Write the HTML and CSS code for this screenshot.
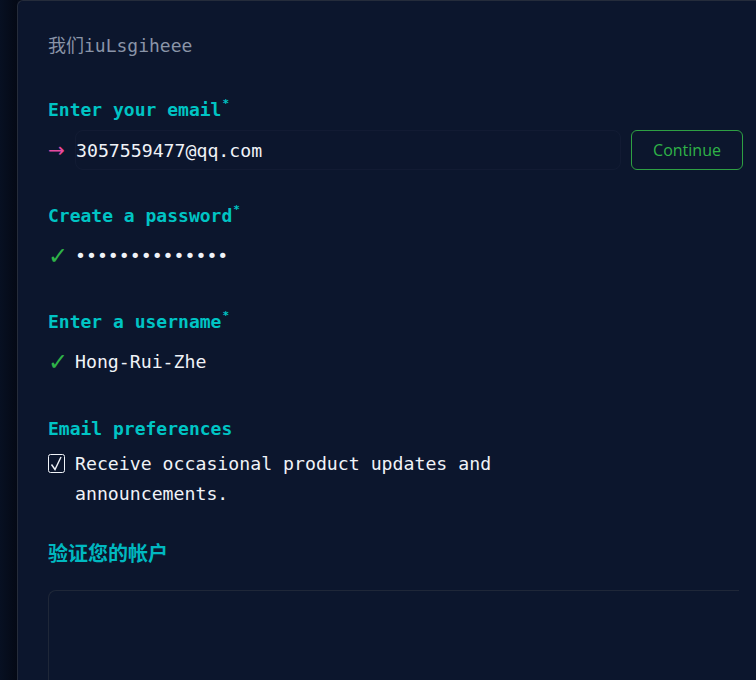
FILE: index.html
```html
<!DOCTYPE html>
<html lang="zh">
<head>
<meta charset="utf-8">
<title>Signup</title>
<link rel="stylesheet" href="styles.css">
</head>
<body>
<div class="page">
  <div class="card">
    <div class="intro">我们iuLsgiheee</div>

    <div class="section first">
      <div class="label">Enter your email<sup class="req">*</sup></div>
      <div class="row">
        <span class="prefix arrow">→</span>
        <div class="input">3057559477@qq.com</div>
        <button class="continue">Continue</button>
      </div>
    </div>

    <div class="section">
      <div class="label">Create a password<sup class="req">*</sup></div>
      <div class="row">
        <span class="prefix check">✓</span>
        <span class="value dots">••••••••••••••</span>
      </div>
    </div>

    <div class="section">
      <div class="label">Enter a username<sup class="req">*</sup></div>
      <div class="row">
        <span class="prefix check">✓</span>
        <span class="value">Hong-Rui-Zhe</span>
      </div>
    </div>

    <div class="section prefs">
      <div class="label">Email preferences</div>
      <div class="row pref-row">
        <span class="prefix box">
          <svg width="18" height="20" viewBox="0 0 18 20"><rect x="0.5" y="0.5" width="16" height="18" rx="2" fill="none" stroke="#f0f3f8" stroke-width="1"/><path d="M3.5 10.5 L7 15.5 L13 3" fill="none" stroke="#f0f3f8" stroke-width="1.4"/></svg>
        </span>
        <span class="value wrap">Receive occasional product updates and announcements.</span>
      </div>
    </div>

    <div class="verify">验证您的帐户</div>
    <div class="captcha"></div>
  </div>
</div>
</body>
</html>
```
FILE: styles.css
```css
html, body {
  margin: 0;
  padding: 0;
  height: 100%;
  overflow: hidden;
  background: #050b19;
}

.page {
  display: flex;
  height: 680px;
  padding-left: 17px;
  background: linear-gradient(90deg, #071022 0%, #040915 100%);
  background-size: 17px 100%;
  background-repeat: no-repeat;
}

.card {
  flex: 1;
  background: #0c162d;
  border: 1px solid #252c3b;
  border-right: none;
  border-bottom: none;
  border-top-left-radius: 6px;
  padding: 30px 0 0 30px;
  font-family: "DejaVu Sans Mono", "Liberation Mono", "Noto Sans CJK SC", monospace;
  font-size: 18.2px;
  color: #f0f3f8;
}

.intro {
  line-height: 30px;
  height: 30px;
  color: #8a94a8;
  font-size: 18px;
}

.section {
  margin-top: 36px;
}

.section.first {
  margin-top: 34px;
}

.section.prefs {
  margin-top: 37px;
}

.label {
  line-height: 30px;
  height: 30px;
  font-weight: bold;
  color: #00c4c4;
  font-size: 18px;
}

.req {
  font-size: 11px;
  vertical-align: top;
  position: relative;
  top: -6px;
  margin-left: 1px;
}

.row {
  display: flex;
  align-items: center;
  height: 30px;
  margin-top: 10px;
}

.prefix {
  width: 27px;
  flex: none;
  display: flex;
  align-items: center;
}

.arrow {
  color: #e64aa0;
  font-size: 20px;
  font-family: "DejaVu Sans", sans-serif;
}

.check {
  color: #2fb348;
  font-size: 24px;
  font-family: "DejaVu Sans", sans-serif;
}

.value {
  line-height: 30px;
}

.dots {
  font-size: 18.2px;
}

.input {
  width: 546px;
  height: 40px;
  box-sizing: border-box;
  border: 1px solid rgba(130, 145, 170, 0.05);
  border-radius: 8px;
  display: flex;
  align-items: center;
  flex: none;
}

.continue {
  margin-left: 10px;
  width: 112px;
  height: 40px;
  box-sizing: border-box;
  background: transparent;
  border: 1px solid #2ea043;
  border-radius: 6px;
  color: #2fb348;
  font-family: "Open Sans", "Noto Sans", sans-serif;
  font-size: 16px;
  padding: 0;
  flex: none;
}

.pref-row {
  margin-top: 5px;
  height: auto;
  align-items: flex-start;
}

.box {
  height: 30px;
}

.wrap {
  max-width: 430px;
}

.verify {
  margin-top: 29px;
  line-height: 30px;
  height: 30px;
  color: #00b8c0;
  font-weight: bold;
  font-size: 20px;
  font-family: "Noto Sans CJK SC", serif;
}

.captcha {
  margin-top: 22px;
  width: 690px;
  height: 120px;
  border: 1px solid #1f2738;
  border-right: none;
  border-top-left-radius: 8px;
}
```
